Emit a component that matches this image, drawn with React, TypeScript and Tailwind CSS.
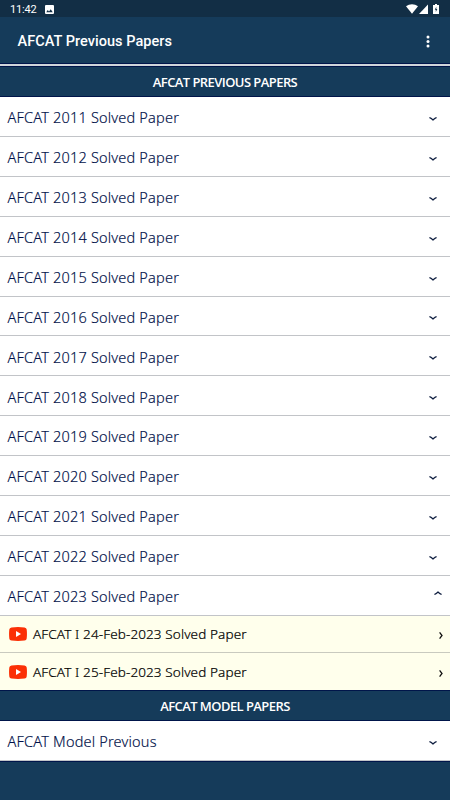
import { ReactNode } from "react";

const years = [2011, 2012, 2013, 2014, 2015, 2016, 2017, 2018, 2019, 2020, 2021, 2022, 2023];
const openYear = 2023;
const papers = ["AFCAT I 24-Feb-2023 Solved Paper", "AFCAT I 25-Feb-2023 Solved Paper"];

function StatusBar() {
    return (
        <div className="flex h-[17px] shrink-0 items-center bg-[#122e45] pl-[10px] pr-[11px] text-white">
            <span className="pt-[2px] font-['Roboto',sans-serif] text-[11px] leading-none tracking-[-0.2px]">11:42</span>
            <svg className="ml-[9px] mt-px h-[9px] w-[9px]" viewBox="0 0 18 18" fill="currentColor">
                <path fillRule="evenodd" d="M2 0h14a2 2 0 0 1 2 2v14a2 2 0 0 1-2 2H2a2 2 0 0 1-2-2V2a2 2 0 0 1 2-2zM5.500 10 2.500 14.500h13l-4-6L8 13z" />
            </svg>
            <svg className="ml-auto h-[10px] w-[12px]" viewBox="0 0 12 10" fill="currentColor">
                <path d="M0 2.200C3.500-.5 8.500-.5 12 2.200L6 9.800z" />
            </svg>
            <svg className="ml-[1px] h-[10px] w-[9px]" viewBox="0 0 9 10" fill="currentColor">
                <path d="M9 .5V10H0z" />
            </svg>
            <svg className="ml-[5px] h-[10px] w-[6px]" viewBox="0 0 6 10" fill="currentColor">
                <path fillRule="evenodd" d="M2 0h2v1h2v9H0V1h2zM3.300 2.800 1.800 5.800h1v2.200L4.300 5H3.300z" />
            </svg>
        </div>
    );
}

function SectionTitle({ children }: { children: ReactNode }) {
    return (
        <h2 className="flex h-[31px] shrink-0 items-center justify-center border-y border-[#00154a] bg-[#153b5a] pt-px font-['Open_Sans',sans-serif] text-[13px] font-semibold leading-none tracking-[-0.57px] text-white">
            {children}
        </h2>
    );
}

function Chevron({ open }: { open?: boolean }) {
    return (
        <svg
            className={open ? "mb-[4px] h-[4px] w-[8px] rotate-180" : "mr-[5px] mt-[5px] h-[4px] w-[8px]"}
            viewBox="0 0 8 4"
            fill="none"
            stroke="#0b1b3d"
            strokeWidth="1.2"
        >
            <path d="M.4.7C2 .8 2.800 2 4 3 5.200 2 6 .8 7.600.7" />
        </svg>
    );
}

function PaperRow({ title, open }: { title: string; open?: boolean }) {
    return (
        <div className="flex h-[39.920px] shrink-0 items-center justify-between border-b border-[#c2c4c8] bg-white pl-[7.500px] pr-[8px]">
            <span className="pt-[2px] font-['Noto_Sans',sans-serif] text-[14.500px] font-light leading-none tracking-[0.19px] text-[#001048] [-webkit-text-stroke:0.15px_#001048]">{title}</span>
            <Chevron open={open} />
        </div>
    );
}

function VideoRow({ title }: { title: string }) {
    return (
        <div className="flex h-[37.200px] shrink-0 items-center border-b border-[#c9cabf] bg-[#ffffec] pl-[9px] pr-[7px] last:border-b-0">
            <svg className="h-[14px] w-[18px]" viewBox="0 0 18 14">
                <path fill="#fb3006" d="M2.500.4Q9-.4 15.500.4 17.500.6 17.700 2.500 18.200 7 17.700 11.500 17.500 13.400 15.500 13.600 9 14.400 2.500 13.600.5 13.400.3 11.500-.2 7 .3 2.500.5.6 2.500.4z" />
                <path fill="#fff" d="M7 4v6l5-3z" />
            </svg>
            <span className="ml-[6px] pt-[2px] font-['Noto_Sans',sans-serif] text-[13.500px] font-light leading-none tracking-[0.12px] text-black [-webkit-text-stroke:0.2px_#000]">{title}</span>
            <svg className="ml-auto mt-[4px] h-[7px] w-[4px]" viewBox="0 0 4 7" fill="none" stroke="#111" strokeWidth="1.300">
                <path d="M.6.4 3 3.500.6 6.600" />
            </svg>
        </div>
    );
}

export default function App() {
    return (
        <div className="flex h-[800px] w-[450px] flex-col overflow-hidden bg-[#153b5a]">
            <StatusBar />
            <header className="flex h-[47px] shrink-0 items-center justify-between border-b border-[#00154a] pl-[17.500px] pr-[20px] pt-[2px] text-white">
                <h1 className="pt-[2px] font-['Roboto',sans-serif] text-[14.500px] font-medium leading-none tracking-[0.04px]">AFCAT Previous Papers</h1>
                <svg className="h-[13px] w-[4px]" viewBox="0 0 4 13" fill="currentColor">
                    <circle cx="2" cy="2" r="1.500" />
                    <circle cx="2" cy="6.500" r="1.500" />
                    <circle cx="2" cy="11" r="1.500" />
                </svg>
            </header>
            <div className="h-[2px] shrink-0 bg-[#d0d5da]" />
            <main className="flex flex-col">
                <SectionTitle>AFCAT PREVIOUS PAPERS</SectionTitle>
                {years.map((year) => (
                    <PaperRow key={year} title={`AFCAT ${year} Solved Paper`} open={year === openYear} />
                ))}
                <div className="flex flex-col">
                    {papers.map((paper) => (
                        <VideoRow key={paper} title={paper} />
                    ))}
                </div>
                <SectionTitle>AFCAT MODEL PAPERS</SectionTitle>
                <PaperRow title="AFCAT Model Previous" />
                <div className="h-px bg-[#00154a]" />
            </main>
        </div>
    );
}
